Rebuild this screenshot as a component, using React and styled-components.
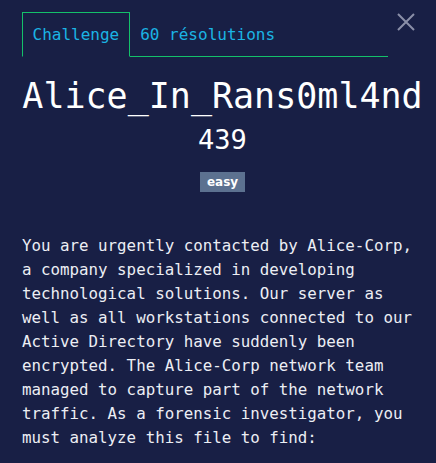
import React from "react";
import styled, { createGlobalStyle } from "styled-components";

const Global = createGlobalStyle`
  html, body { margin: 0; padding: 0; background: #181f45; }
  body { font-family: "DejaVu Sans Mono", "Liberation Mono", monospace; }
`;

const Modal = styled.div`
  position: relative;
  width: 436px;
  height: 463px;
  overflow: hidden;
  background: #181f45;
  padding: 12px 48px 0 22px;
  box-sizing: border-box;
  color: #eceef4;
`;

const Close = styled.button`
  position: absolute;
  top: 12px;
  right: 20px;
  width: 20px;
  height: 20px;
  padding: 0;
  border: none;
  background: none;
  cursor: pointer;
  display: flex;
  align-items: center;
  justify-content: center;
`;

const Tabs = styled.ul`
  list-style: none;
  margin: 0;
  padding: 0;
  display: flex;
  border-bottom: 1px solid #14c06a;
`;

const Tab = styled.li`
  height: 43px;
  display: flex;
  align-items: center;
  padding: 0 9.5px;
  margin-bottom: -1px;
  font-size: 16px;
  color: #1bb4e4;
  border: 1px solid ${(p) => (p.$active ? "#14c06a" : "transparent")};
  border-bottom: 1px solid ${(p) => (p.$active ? "#181f45" : "transparent")};
`;

const Header = styled.div`
  margin-right: -35px;
  text-align: center;
`;

const Title = styled.h1`
  margin: 18px 0 0;
  font-size: 35px;
  font-weight: normal;
  line-height: 42px;
  white-space: nowrap;
  color: #fff;
`;

const Points = styled.div`
  font-size: 27px;
  line-height: 32px;
  margin-top: 7px;
  color: #fff;
`;

const Badge = styled.span`
  display: inline-block;
  margin-top: 16px;
  background: #5c7190;
  color: #fff;
  font-family: "DejaVu Sans", Verdana, sans-serif;
  font-weight: bold;
  font-size: 12px;
  line-height: 20px;
  padding: 0 7px;
`;

const Desc = styled.p`
  margin: 42px -30px 0 0;
  font-size: 15.8px;
  line-height: 24px;
  color: #eceef4;
`;

export default function App() {
  return (
    <>
      <Global />
      <Modal>
        <Close aria-label="close">
          <svg width="18" height="18" viewBox="0 0 18 18">
            <path d="M1 1L17 17M17 1L1 17" stroke="#8a8fa8" strokeWidth="2" />
          </svg>
        </Close>
        <Tabs>
          <Tab $active>Challenge</Tab>
          <Tab>60 résolutions</Tab>
        </Tabs>
        <Header>
          <Title>Alice_In_Rans0ml4nd</Title>
          <Points>439</Points>
          <Badge>easy</Badge>
        </Header>
        <Desc>
          You are urgently contacted by Alice-Corp, a company specialized in
          developing technological solutions. Our server as well as all
          workstations connected to our Active Directory have suddenly been
          encrypted. The Alice-Corp network team managed to capture part of the
          network traffic. As a forensic investigator, you must analyze this
          file to find:
        </Desc>
      </Modal>
    </>
  );
}
